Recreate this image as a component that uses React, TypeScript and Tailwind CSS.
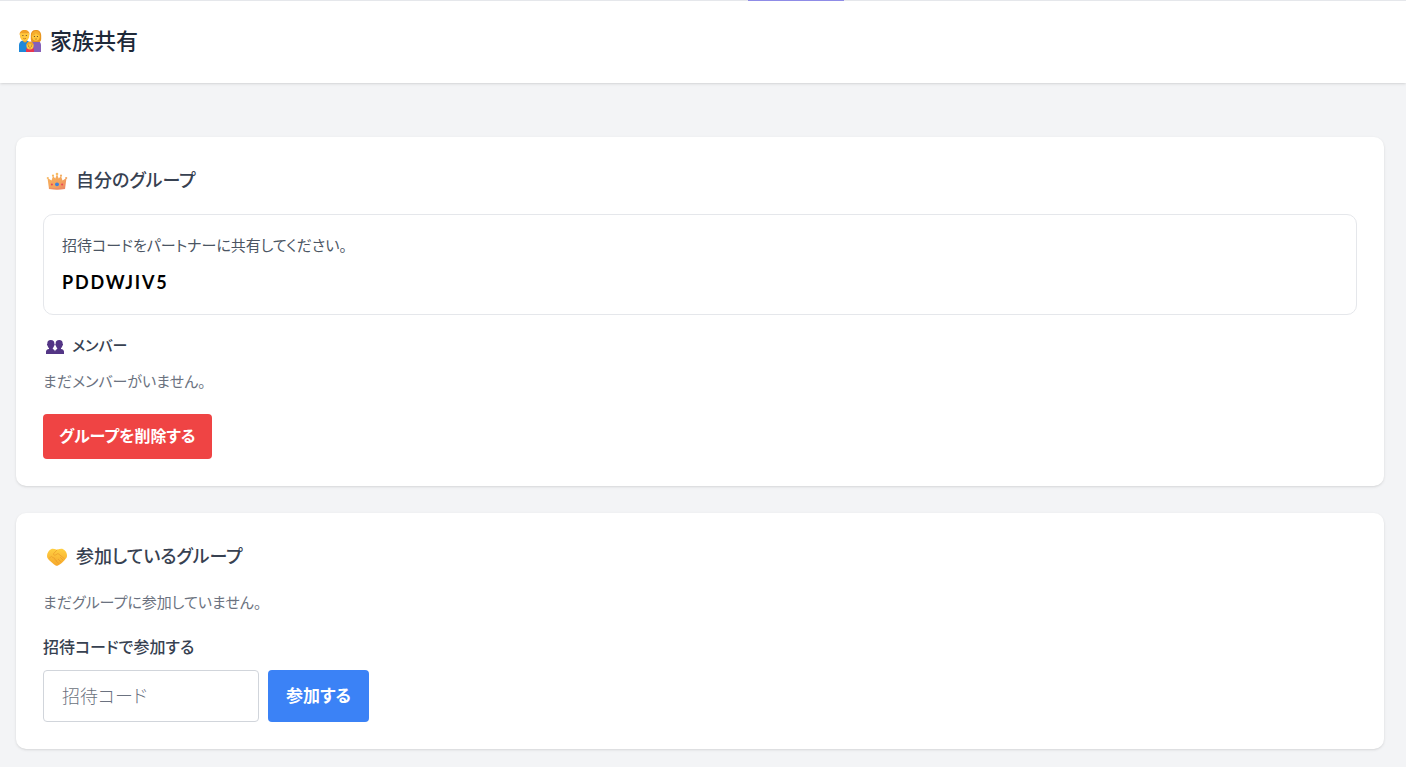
import { useId } from "react";
import type { ReactNode } from "react";

function FamilyIcon() {
  return (
    <svg viewBox="0 0 24 24" className="mt-1 size-6 shrink-0" aria-hidden="true">
      <path d="M1 23v-7c0-2.500 2-4.500 4.500-4.500h2.500c2.500 0 4 2 4 4.500v7z" fill="#1e88d8" />
      <path d="M12 23v-7c0-2.500 1.500-4.500 4-4.500h2.500c2.500 0 4.500 2 4.500 4.500v7z" fill="#8660b8" />
      <path d="M12.800 10V6.500C12.800 3 14.500 1 17.800 1S23.200 3 23.200 6.500V10c0 2.500-1.500 3-3 3h-4c-2 0-3.400-.5-3.400-3z" fill="#e8951f" />
      <rect x="5" y="9" width="4" height="4.500" rx="2" fill="#f2a52a" />
      <ellipse cx="6.600" cy="6.700" rx="4.700" ry="5.200" fill="#ffc83d" />
      <ellipse cx="17.900" cy="7.300" rx="4" ry="4.400" fill="#ffc83d" />
      <path d="M1.600 6C1.400 3 3.200 1 6.600 1s5.200 2 5 5l-1.200-2C8.100 4.300 4.900 4.200 3 4z" fill="#f1a126" />
      <path d="M13.500 7c2.500-.3 3.900-1.500 4.400-3 1 1.500 2.400 2 4.400 2.500C22 3.500 20.500 2 18 2s-4.500 2-4.500 5z" fill="#f5ad2d" />
      <circle cx="4.900" cy="6.500" r=".6" fill="#593b2a" />
      <circle cx="8.300" cy="6.500" r=".6" fill="#593b2a" />
      <circle cx="16.400" cy="7.500" r=".6" fill="#593b2a" />
      <circle cx="19.400" cy="7.500" r=".6" fill="#593b2a" />
      <path d="M5.200 9.300q1.400 1 2.800 0M16.800 9.800q1.100.8 2.200 0" fill="none" stroke="#b96619" strokeWidth=".7" />
      <path d="M8 23v-2c0-2 1.500-3 4-3s4 1 4 3v2z" fill="#e8364f" />
      <circle cx="12" cy="16.800" r="3.600" fill="#ffc83d" />
      <path d="M8.400 16.500c0-2.600 1.400-4 3.600-4s3.600 1.400 3.600 4c-1.700-.4-2.900-1-3.600-2-.8 1-2 1.600-3.600 2z" fill="#f2a328" />
      <circle cx="10.700" cy="17" r=".5" fill="#593b2a" />
      <circle cx="13.300" cy="17" r=".5" fill="#593b2a" />
      <path d="M11 18.700q1 .7 2 0" fill="none" stroke="#c94f26" strokeWidth=".6" />
    </svg>
  );
}

function CrownIcon() {
  const id = useId();
  return (
    <svg viewBox="0 0 22 20" className="mt-[3px] h-5 w-[22px] shrink-0" aria-hidden="true">
      <defs>
        <linearGradient id={id} x1="0" y1="0" x2="1" y2="1">
          <stop offset="0" stopColor="#f8b35c" />
          <stop offset=".6" stopColor="#f3a35d" />
          <stop offset="1" stopColor="#ec8067" />
        </linearGradient>
      </defs>
      <path
        d="M1.500 7l4 2.500L7 5l2.300 2.500L11 3l1.700 4.500L15 5l1.500 4.500 4-2.500L19 18q-8 1.500-16 0z"
        fill={`url(#${id})`}
      />
      <circle cx="1.800" cy="7" r="1.100" fill="#f7ba67" />
      <circle cx="7" cy="4.700" r="1.100" fill="#f7b75f" />
      <circle cx="11" cy="3" r="1.300" fill="#f9bd66" />
      <circle cx="15" cy="4.700" r="1.100" fill="#f4ad60" />
      <circle cx="20.200" cy="7" r="1.100" fill="#f1a765" />
      <path d="M3 17q8 1.500 16 0" fill="none" stroke="#ed8b66" strokeWidth="1.200" />
      <circle cx="5.900" cy="13.500" r="1" fill="#e84756" />
      <ellipse cx="11" cy="13.300" rx="2" ry="1.900" fill="#3e83dc" />
      <circle cx="16.100" cy="13.500" r="1" fill="#e84756" />
    </svg>
  );
}

function MembersIcon() {
  return (
    <svg viewBox="0 0 18 16" className="mt-[3px] h-4 w-[18px] shrink-0" fill="#533585" aria-hidden="true">
      <path d="M1.400 4.500C1.200 2.300 2.300 1 4.800 1s3.700 1.300 3.500 3.500c.7.500.5 2-.2 2.200-.3 1.300-.8 1.900-1.300 2.400v1c1.400.4 2 1.500 2.200 2.500V15H0v-2.400c.3-1.300 1.200-2.300 3-2.500v-1C2.300 8.600 1.900 8 1.600 6.700.9 6.500.7 5 1.400 4.500z" />
      <path d="M9.700 4.500C9.500 2.300 10.700 1 13.200 1s3.600 1.300 3.400 3.500c.7.500.5 2-.2 2.200-.3 1.300-.7 1.900-1.400 2.400v1c1.800.2 2.700 1.200 3 2.500V15H9v-2.400c.2-1 .8-2.100 2.200-2.500v-1c-.5-.5-1-1.100-1.300-2.400-.7-.2-.9-1.700-.2-2.200z" />
    </svg>
  );
}

function HandshakeIcon() {
  const id = useId();
  return (
    <svg viewBox="0 0 22 20" className="mt-[3px] h-5 w-[22px] shrink-0" aria-hidden="true">
      <defs>
        <linearGradient id={id} x1="0" y1="0" x2="0" y2="1">
          <stop offset="0" stopColor="#ffcf42" />
          <stop offset="1" stopColor="#f6a82c" />
        </linearGradient>
      </defs>
      <path
        d="M5.500 2C3 3 1 6 1 9c0 1.700 1 3 2.200 4.200l4.600 4c1.300 1.300 2.900 1.900 4.200 1.200 3-1.600 5-3.400 6.500-5.200C20.400 11.300 21.200 10 21 8c-.3-2.700-2-5-4.300-6-1.600-.5-3.500.3-5.700.7C9 2.300 7 1.500 5.500 2z"
        fill={`url(#${id})`}
      />
      <path
        d="M11 3L7.700 6.500c-.8 1.200.7 2.200 2 1.400L12 6.500l6.200 5M14.500 10.500l2.300 2.300M12.300 12.300l2.200 2.200M10.300 14.200l2 2M3.500 11l2-1.600 1.500 1.300 1.500.4.500 1.700 1.500.8"
        fill="none"
        stroke="#ea9a2a"
        strokeWidth=".7"
        strokeLinecap="round"
        strokeLinejoin="round"
      />
    </svg>
  );
}

interface GroupCardProps {
  icon: ReactNode;
  title: string;
  children: ReactNode;
}

function GroupCard({ icon, title, children }: GroupCardProps) {
  return (
    <section className="rounded-[10px] bg-white p-[27px] shadow-sm">
      <h2 className="flex items-center gap-2 pl-[3px] text-[18px] leading-[30px] font-medium text-[#374151]">
        {icon}
        {title}
      </h2>
      {children}
    </section>
  );
}

export default function App() {
  return (
    <div
      lang="ja"
      className="min-h-screen bg-gray-100 font-['Noto_Sans_CJK_JP',sans-serif] [font-feature-settings:'palt']"
    >
      {/* Header */}
      <header className="border-t border-gray-200 bg-white shadow-sm">
        <div className="-mt-px ml-[53.2%] h-px w-24 bg-[#8f8ce7]" />
        <div className="px-[18px] pt-[22px] pb-7">
          <h1 className="flex items-center gap-2 text-[22px] leading-8 font-medium text-gray-800">
            <FamilyIcon />
            家族共有
          </h1>
        </div>
      </header>

      <main className="flex flex-col gap-[27px] pt-[54px] pr-[22px] pb-[18px] pl-4">
        {/* Own group */}
        <GroupCard icon={<CrownIcon />} title="自分のグループ">
          <div className="mt-5 rounded-[10px] border border-gray-200 p-[18px]">
            <p className="text-[15px] leading-6 text-[#4b5563]">
              招待コードをパートナーに共有してください。
            </p>
            <p className="mt-3 font-[Lato,sans-serif] text-[18px] leading-[27px] font-bold tracking-widest text-black">
              PDDWJIV5
            </p>
          </div>
          <h3 className="mt-4 flex items-center gap-2 pl-[3px] text-[15px] leading-7 font-medium text-[#374151]">
            <MembersIcon />
            メンバー
          </h3>
          <p className="mt-2 text-[15px] leading-7 text-[#6b7280]">まだメンバーがいません。</p>
          <button
            type="button"
            className="mt-[19px] h-[45px] rounded-sm bg-[#ef4444] px-4 pb-[3px] text-[16px] font-bold text-white"
          >
            グループを削除する
          </button>
        </GroupCard>

        {/* Joined groups */}
        <GroupCard icon={<HandshakeIcon />} title="参加しているグループ">
          <p className="mt-[18px] text-[15px] leading-7 text-[#6b7280]">
            まだグループに参加していません。
          </p>
          <form onSubmit={(e) => e.preventDefault()}>
            <label
              htmlFor="invite-code"
              className="mt-4 block text-[16px] leading-7 font-medium text-[#374151]"
            >
              招待コードで参加する
            </label>
            <div className="mt-[10px] flex gap-[9px]">
              <input
                id="invite-code"
                type="text"
                placeholder="招待コード"
                className="h-[52px] w-[216px] rounded-sm border border-[#d1d5db] px-[18px] pb-[3px] text-[18px] font-light placeholder:text-[#6b7280]"
              />
              <button
                type="submit"
                className="rounded-sm bg-[#3b82f6] px-[18px] pb-[3px] text-[17px] font-bold text-white"
              >
                参加する
              </button>
            </div>
          </form>
        </GroupCard>
      </main>
    </div>
  );
}
